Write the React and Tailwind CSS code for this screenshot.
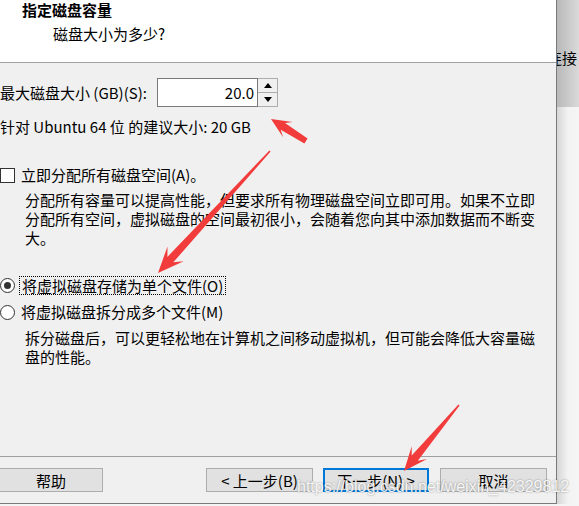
import React from 'react';

const font = "font-['Noto_Sans_CJK_SC','Noto_Sans',sans-serif]";

// polygon for a screenshot-tool style red arrow, tail -> tip
const arrowPoints = (tx, ty, px, py, head, hw, w0, w1) => {
    const dx = px - tx;
    const dy = py - ty;
    const len = Math.hypot(dx, dy);
    const ux = dx / len;
    const uy = dy / len;
    const nx = -uy;
    const ny = ux;
    const bx = px - ux * head;
    const by = py - uy * head;
    const sx = px - ux * head * 0.7;
    const sy = py - uy * head * 0.7;
    const pts = [
        [tx + nx * w0, ty + ny * w0],
        [sx + nx * w1, sy + ny * w1],
        [bx + nx * hw, by + ny * hw],
        [px, py],
        [bx - nx * hw, by - ny * hw],
        [sx - nx * w1, sy - ny * w1],
        [tx - nx * w0, ty - ny * w0],
    ];
    return pts.map((p) => p[0].toFixed(1) + ',' + p[1].toFixed(1)).join(' ');
};

const Button = ({ children, primary, className = '' }) => (
    <div
        className={`h-[24px] flex items-center justify-center bg-[#e1e1e1] leading-none ${
            primary ? 'border-2 border-[#0078d7]' : 'border border-[#adadad]'
        } ${className}`}
    >
        {children}
    </div>
);

const Radio = ({ checked }) => (
    <div className="w-[15px] h-[15px] shrink-0 rounded-full border border-[#333] bg-white flex items-center justify-center">
        {checked && <div className="w-[7px] h-[7px] rounded-full bg-[#333]" />}
    </div>
);

// the dialog wraps its help text at fixed places
const Lines = ({ lines, className = '' }) => (
    <div className={`pl-[25px] leading-[19px] whitespace-nowrap ${className}`}>
        {lines.map((l) => (
            <div key={l}>{l}</div>
        ))}
    </div>
);

export default function App() {
    return (
        <div className={`relative w-[579px] h-[506px] overflow-hidden bg-[#f4f4f4] text-black text-[15px] ${font}`}>
            <div className="flex">
                {/* dialog */}
                <div className="w-[557px] h-[504px] flex flex-col border-r border-b border-[#7a7a7a] bg-[#f0f0f0]">
                    <div className="h-[63px] bg-white border-b border-[#a0a0a0]">
                        <div className="pl-[22px] leading-[20px] font-bold">指定磁盘容量</div>
                        <div className="pl-[53px] mt-[4px] leading-[20px]">磁盘大小为多少?</div>
                    </div>

                    <div className="flex-1">
                        <div className="mt-[15px] flex items-center h-[29px]">
                            <span className="w-[157px] leading-[20px]">最大磁盘大小 (GB)(S):</span>
                            <div className="w-[101px] h-[29px] bg-white border border-[#7a7a7a] flex items-center justify-end pr-[3px] leading-none">
                                20.0
                            </div>
                            <div className="w-[20px] h-[29px] flex flex-col border border-l-0 border-[#adadad] bg-[#f0f0f0]">
                                <div className="flex-1 flex items-center justify-center border-b border-[#adadad]">
                                    <div className="w-0 h-0 border-l-[4px] border-r-[4px] border-b-[5px] border-l-transparent border-r-transparent border-b-black" />
                                </div>
                                <div className="flex-1 flex items-center justify-center">
                                    <div className="w-0 h-0 border-l-[4px] border-r-[4px] border-t-[5px] border-l-transparent border-r-transparent border-t-black" />
                                </div>
                            </div>
                        </div>
                        <div className="mt-[10px] leading-[20px]">针对 Ubuntu 64 位 的建议大小: 20 GB</div>

                        <div className="mt-[28px] flex items-center h-[20px]">
                            <div className="w-[15px] h-[15px] border border-[#333] bg-white" />
                            <span className="ml-[6px] leading-[20px]">立即分配所有磁盘空间(A)。</span>
                        </div>
                        <Lines
                            className="mt-[5px]"
                            lines={[
                                '分配所有容量可以提高性能，但要求所有物理磁盘空间立即可用。如果不立即',
                                '分配所有空间，虚拟磁盘的空间最初很小，会随着您向其中添加数据而不断变',
                                '大。',
                            ]}
                        />

                        <div className="mt-[28px] flex items-center h-[20px]">
                            <Radio checked />
                            <span className="ml-[4px] px-[2px] leading-[17px] border border-dotted border-black">将虚拟磁盘存储为单个文件(O)</span>
                        </div>
                        <div className="mt-[7px] flex items-center h-[20px]">
                            <Radio />
                            <span className="ml-[6px] leading-[20px]">将虚拟磁盘拆分成多个文件(M)</span>
                        </div>
                        <Lines
                            className="mt-[6px]"
                            lines={[
                                '拆分磁盘后，可以更轻松地在计算机之间移动虚拟机，但可能会降低大容量磁',
                                '盘的性能。',
                            ]}
                        />
                    </div>

                    <div className="border-t border-[#a0a0a0] pt-[11px] pb-[11px] flex">
                        <Button className="w-[104px] -ml-px">帮助</Button>
                        <Button className="w-[107px] ml-[103px]">&lt; 上一步(B)</Button>
                        <Button primary className="w-[106px] ml-[10px]">下一步(N) &gt;</Button>
                        <Button className="w-[107px] ml-[11px]">取消</Button>
                    </div>
                </div>

                {/* window behind */}
                <div className="flex-1 h-[504px] flex flex-col overflow-hidden">
                    <div className="h-[107px] bg-gradient-to-r from-[#b9b9b9] to-[#dadada] overflow-hidden">
                        <div className="mt-[48px] -ml-[10px] whitespace-nowrap leading-[20px]">连接</div>
                    </div>
                    <div className="flex-1 bg-gradient-to-r from-[#d6d6d6] via-[#f3f3f3] to-[#f5f5f5]" />
                </div>
            </div>

            {/* watermark */}
            <div className="absolute left-[297px] top-[477px] font-['Liberation_Sans',Arial,sans-serif] text-[16px] leading-[20px] text-white/90 [text-shadow:0_0_2px_rgba(0,0,0,0.45)] whitespace-nowrap">
                https://blog.csdn.net/weixin_42329812
            </div>

            {/* red arrows */}
            <svg className="absolute inset-0 pointer-events-none" width="579" height="506">
                <polygon fill="#f23c3c" points={arrowPoints(306, 141, 271, 119, 20, 9, 3, 4)} />
                <polygon fill="#f23c3c" points={arrowPoints(270, 151, 158, 273, 26, 11, 0.8, 4)} />
                <polygon fill="#f23c3c" points={arrowPoints(459, 405, 404, 471, 24, 10, 0.8, 4)} />
            </svg>
        </div>
    );
}
